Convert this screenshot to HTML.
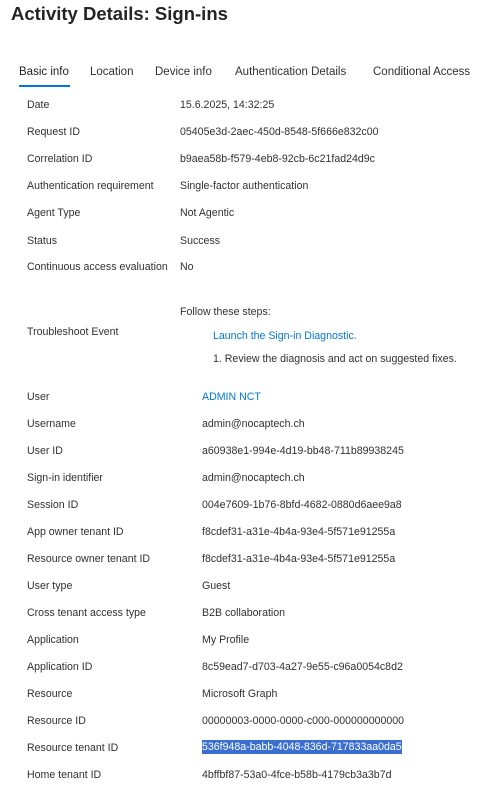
<!DOCTYPE html>
<html><head><style>
body{margin:0;background:#fff;width:480px;height:787px;overflow:hidden;font-family:"Segoe UI","Liberation Sans",sans-serif;color:#323130;position:relative}
.t{position:absolute;left:11px;top:3px;font-size:18.5px;font-weight:600;color:#252423}
.tab{position:absolute;top:66px;font-size:11.5px;color:#323130;white-space:nowrap}
.ul{position:absolute;left:19px;top:85px;width:51px;height:2px;background:#0078d4}
.r{position:absolute;font-size:10.6px;white-space:nowrap}
.l{left:27px}
.v1{left:180px}
.v2{left:202px}
.lk{color:#0078d4}
.hl{background:#3a6fd1;color:#fff}
</style></head><body>
<div class="t">Activity Details: Sign-ins</div>
<div class="tab" style="left:19px;color:#201f1e">Basic info</div>
<div class="tab" style="left:90px">Location</div>
<div class="tab" style="left:155px">Device info</div>
<div class="tab" style="left:235px">Authentication Details</div>
<div class="tab" style="left:373px">Conditional Access</div>
<div class="ul"></div>

<div class="r l" style="top:99px">Date</div><div class="r v1" style="top:99px">15.6.2025, 14:32:25</div>
<div class="r l" style="top:126px">Request ID</div><div class="r v1" style="top:126px">05405e3d-2aec-450d-8548-5f666e832c00</div>
<div class="r l" style="top:153px">Correlation ID</div><div class="r v1" style="top:153px">b9aea58b-f579-4eb8-92cb-6c21fad24d9c</div>
<div class="r l" style="top:180px">Authentication requirement</div><div class="r v1" style="top:180px">Single-factor authentication</div>
<div class="r l" style="top:207px">Agent Type</div><div class="r v1" style="top:207px">Not Agentic</div>
<div class="r l" style="top:235px">Status</div><div class="r v1" style="top:235px">Success</div>
<div class="r l" style="top:261px">Continuous access evaluation</div><div class="r v1" style="top:261px">No</div>

<div class="r v1" style="top:306px">Follow these steps:</div>
<div class="r l" style="top:326px">Troubleshoot Event</div>
<div class="r lk" style="left:213px;top:330px">Launch the Sign-in Diagnostic.</div>
<div class="r" style="left:213px;top:353px">1. Review the diagnosis and act on suggested fixes.</div>

<div class="r l" style="top:391px">User</div><div class="r v2 lk" style="top:391px">ADMIN NCT</div>
<div class="r l" style="top:418px">Username</div><div class="r v2" style="top:418px">admin@nocaptech.ch</div>
<div class="r l" style="top:445px">User ID</div><div class="r v2" style="top:445px">a60938e1-994e-4d19-bb48-711b89938245</div>
<div class="r l" style="top:472px">Sign-in identifier</div><div class="r v2" style="top:472px">admin@nocaptech.ch</div>
<div class="r l" style="top:499px">Session ID</div><div class="r v2" style="top:499px">004e7609-1b76-8bfd-4682-0880d6aee9a8</div>
<div class="r l" style="top:526px">App owner tenant ID</div><div class="r v2" style="top:526px">f8cdef31-a31e-4b4a-93e4-5f571e91255a</div>
<div class="r l" style="top:553px">Resource owner tenant ID</div><div class="r v2" style="top:553px">f8cdef31-a31e-4b4a-93e4-5f571e91255a</div>
<div class="r l" style="top:580px">User type</div><div class="r v2" style="top:580px">Guest</div>
<div class="r l" style="top:607px">Cross tenant access type</div><div class="r v2" style="top:607px">B2B collaboration</div>
<div class="r l" style="top:634px">Application</div><div class="r v2" style="top:634px">My Profile</div>
<div class="r l" style="top:661px">Application ID</div><div class="r v2" style="top:661px">8c59ead7-d703-4a27-9e55-c96a0054c8d2</div>
<div class="r l" style="top:688px">Resource</div><div class="r v2" style="top:688px">Microsoft Graph</div>
<div class="r l" style="top:715px">Resource ID</div><div class="r v2" style="top:715px">00000003-0000-0000-c000-000000000000</div>
<div class="r l" style="top:742px">Resource tenant ID</div><div class="r v2 hl" style="top:740px;padding:1px 0">536f948a-babb-4048-836d-717833aa0da5</div>
<div class="r l" style="top:769px">Home tenant ID</div><div class="r v2" style="top:769px">4bffbf87-53a0-4fce-b58b-4179cb3a3b7d</div>
</body></html>
